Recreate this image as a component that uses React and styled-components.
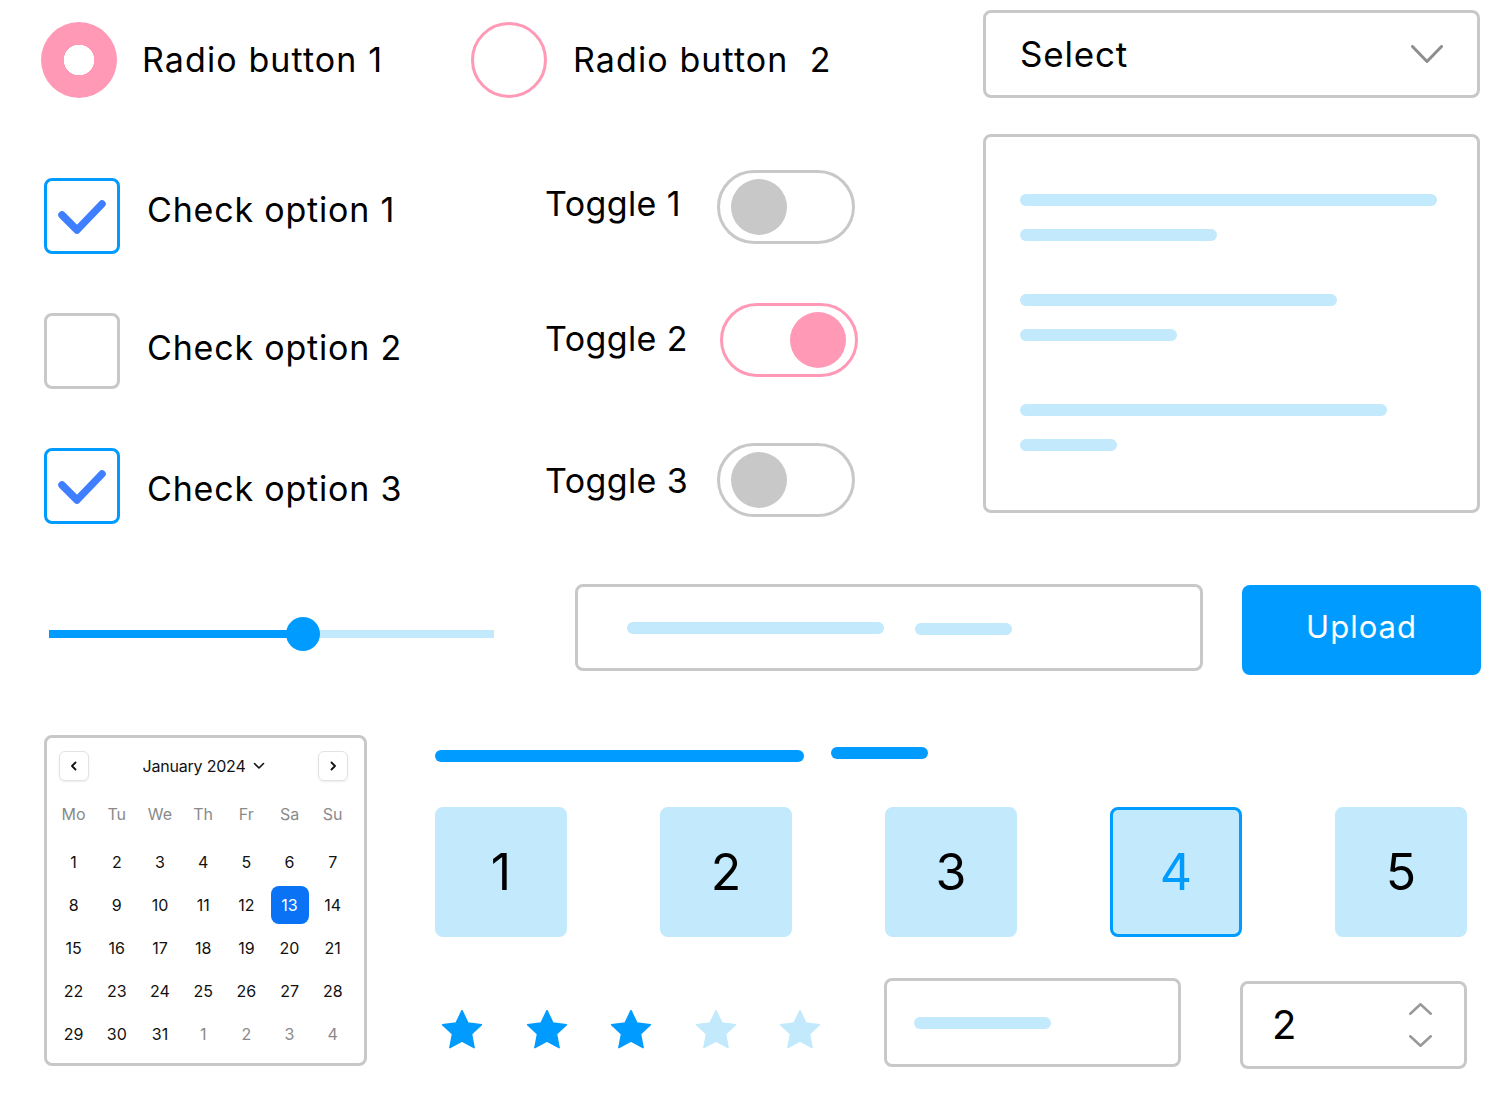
import React from "react";
import styled, { createGlobalStyle } from "styled-components";

const C = {
  pink: "#FF99B6",
  blue: "#009BFF",
  light: "#C2E9FC",
  gray: "#C8C8C8",
  check: "#3F7FFF",
  chevron: "#8E8E8E",
};

const Global = createGlobalStyle`
  html, body { margin: 0; padding: 0; background: #fff; }
  body { font-family: Inter, "Open Sans", sans-serif; color: #000; }
  * { box-sizing: border-box; }
`;

const Page = styled.div`
  width: 1500px;
  height: 1100px;
  display: flex;
  flex-direction: column;
  overflow: hidden;
`;

const TopSection = styled.div`
  height: 584px;
  padding: 10px 0 0 41px;
  display: grid;
  grid-template-columns: 942px 497px;
  align-items: start;
`;

const LeftCol = styled.div`
  display: flex;
  flex-direction: column;
`;

const RadioRow = styled.div`
  margin-top: 12px;
  display: grid;
  grid-template-columns: 430px auto;
`;

const RadioItem = styled.div`
  display: flex;
  align-items: center;
  gap: ${(p) => p.$gap || 25}px;
`;

const RadioCircle = styled.div`
  width: 76px;
  height: 76px;
  border-radius: 50%;
  flex: none;
  ${(p) =>
    p.$on
      ? `background: radial-gradient(circle, #fff 0 15px, ${C.pink} 15.5px);`
      : `border: 3px solid ${C.pink}; background: #fff;`}
`;

const Label = styled.span`
  font-size: ${(p) => p.$size || 34}px;
  letter-spacing: ${(p) => p.$ls ?? 0.8}px;
  line-height: 1;
  white-space: pre;
  color: ${(p) => p.$color || "#000"};
  margin-top: ${(p) => (p.$dy > 0 ? p.$dy * 2 : 0)}px;
  margin-bottom: ${(p) => (p.$dy < 0 ? -p.$dy * 2 : 0)}px;
`;

const ControlsRow = styled.div`
  margin-top: 72px;
  display: flex;
  align-items: flex-start;
`;

const CheckStack = styled.div`
  margin-left: 3px;
  width: 501px;
  padding-top: 8px;
  display: flex;
  flex-direction: column;
  gap: 59px;
`;

const CheckItem = styled.div`
  display: flex;
  align-items: center;
  gap: 27px;
  height: 76px;
`;

const CheckBox = styled.div`
  width: 76px;
  height: 76px;
  flex: none;
  border-radius: 8px;
  border: 3px solid ${(p) => (p.$on ? C.blue : C.gray)};
  display: flex;
  align-items: center;
  justify-content: center;
  position: relative;
`;

const ToggleStack = styled.div`
  display: flex;
  flex-direction: column;
`;

const ToggleItem = styled.div`
  display: grid;
  grid-template-columns: 172px 138px;
  align-items: center;
  height: 74px;
  margin-top: ${(p) => p.$mt || 0}px;
`;

const Track = styled.div`
  width: 138px;
  height: 74px;
  border-radius: 37px;
  border: 3px solid ${(p) => (p.$on ? C.pink : C.gray)};
  padding: 0 9px 0 11px;
  margin-left: ${(p) => p.$dx || 0}px;
  display: flex;
  align-items: center;
  justify-content: ${(p) => (p.$on ? "flex-end" : "flex-start")};
  background: #fff;
`;

const Knob = styled.div`
  width: 56px;
  height: 56px;
  border-radius: 50%;
  background: ${(p) => (p.$on ? C.pink : C.gray)};
`;

const RightCol = styled.div`
  display: flex;
  flex-direction: column;
  gap: 36px;
`;

const Box = styled.div`
  border: 3px solid ${C.gray};
  border-radius: 8px;
  background: #fff;
  width: ${(p) => p.$w}px;
  height: ${(p) => p.$h}px;
  flex: none;
`;

const SelectBox = styled(Box)`
  display: flex;
  align-items: center;
  justify-content: space-between;
  padding: 0 34px 0 34px;
`;

const TextPanel = styled(Box)`
  padding: 57px 0 0 34px;
  display: flex;
  flex-direction: column;
`;

const Line = styled.div`
  height: 12px;
  border-radius: 6px;
  background: ${C.light};
  width: ${(p) => p.$w}px;
  margin-top: ${(p) => p.$mt || 0}px;
  flex: none;
`;

const MidRow = styled.div`
  height: 91px;
  display: flex;
  align-items: flex-start;
`;

const SliderWrap = styled.div`
  margin-left: 49px;
  width: 445px;
  height: 100px;
  display: flex;
  align-items: center;
`;

const SliderFill = styled.div`
  height: 8px;
  background: ${C.blue};
  flex: none;
`;

const SliderRest = styled.div`
  height: 8px;
  background: ${C.light};
  flex: 1;
`;

const SliderThumb = styled.div`
  width: 34px;
  height: 34px;
  border-radius: 50%;
  background: ${C.blue};
  flex: none;
  margin: 0 -17px;
  position: relative;
  z-index: 1;
`;

const InputBox = styled(Box)`
  margin-left: ${(p) => p.$ml || 0}px;
  margin-top: ${(p) => p.$mt || 0}px;
  display: flex;
  align-items: center;
  gap: ${(p) => p.$gap || 0}px;
  padding-left: ${(p) => p.$pl || 0}px;
`;

const UploadButton = styled.button`
  margin-left: 39px;
  margin-top: 1px;
  width: 239px;
  height: 90px;
  border: none;
  border-radius: 8px;
  background: ${C.blue};
  color: #fff;
  font-family: Inter, sans-serif;
  font-size: 31px;
  letter-spacing: 1px;
  display: flex;
  align-items: center;
  justify-content: center;
  padding: 0 0 7px 0;
`;

const BottomRow = styled.div`
  margin-top: 60px;
  display: flex;
  align-items: flex-start;
`;

const Calendar = styled(Box)`
  margin-left: 44px;
  padding: 13px 10px 0 5px;
  font-family: Inter, sans-serif;
`;

const CalHeader = styled.div`
  display: flex;
  align-items: center;
  justify-content: space-between;
  padding: 0 6px 0 7px;
  height: 30px;
`;

const NavBtn = styled.div`
  width: 30px;
  height: 30px;
  border: 1px solid #E2E2E2;
  border-radius: 6px;
  box-shadow: 0 1px 2px rgba(0, 0, 0, 0.08);
  display: flex;
  align-items: center;
  justify-content: center;
`;

const MonthTitle = styled.div`
  display: flex;
  align-items: center;
  gap: 7px;
  font-size: 16px;
  letter-spacing: -0.2px;
  color: #111;
`;

const CalGrid = styled.div`
  display: grid;
  grid-template-columns: repeat(7, 43.2px);
  grid-auto-rows: 43px;
  margin-top: ${(p) => p.$mt || 0}px;
`;

const DayCell = styled.div`
  display: flex;
  align-items: center;
  justify-content: center;
  font-size: 16px;
  color: ${(p) => (p.$muted ? "#8A8A8A" : "#111")};
`;

const Selected = styled.span`
  width: 38px;
  height: 38px;
  border-radius: 8px;
  background: #0A72F4;
  color: #fff;
  display: flex;
  align-items: center;
  justify-content: center;
`;

const RightArea = styled.div`
  margin-left: 68px;
  width: 1046px;
  display: flex;
  flex-direction: column;
`;

const ProgressRow = styled.div`
  margin-top: 12px;
  display: flex;
  align-items: flex-start;
  gap: 27px;
`;

const Bar = styled.div`
  height: 12px;
  border-radius: 6px;
  background: ${C.blue};
  width: ${(p) => p.$w}px;
  margin-top: ${(p) => p.$mt || 0}px;
`;

const PageRow = styled.div`
  margin-top: 45px;
  display: flex;
  gap: 93px;
`;

const PageBox = styled.div`
  width: 132px;
  height: 130px;
  border-radius: 8px;
  background: ${C.light};
  border: 3px solid ${(p) => (p.$active ? C.blue : C.light)};
  display: flex;
  align-items: center;
  justify-content: center;
  font-size: 50px;
  color: ${(p) => (p.$active ? C.blue : "#000")};
`;

const BottomControls = styled.div`
  margin-top: 41px;
  display: flex;
  align-items: flex-start;
`;

const Stars = styled.div`
  margin-top: 30px;
  margin-left: 5px;
  display: flex;
  gap: 40.5px;
`;

const NumberBox = styled(Box)`
  margin-left: 59px;
  margin-top: 3px;
  display: flex;
  align-items: center;
  justify-content: space-between;
  padding: 0 32px 0 29px;
`;

const Spinner = styled.div`
  display: flex;
  flex-direction: column;
  gap: 20px;
`;

const Star = ({ on }) => (
  <svg width="44" height="43" viewBox="0 0 24 23">
    <path
      d="M12 1.2 L15.2 7.9 L22.6 8.9 L17.2 14 L18.6 21.4 L12 17.8 L5.4 21.4 L6.8 14 L1.4 8.9 L8.8 7.9 Z"
      fill={on ? C.blue : C.light}
      stroke={on ? C.blue : C.light}
      strokeWidth="0.8"
      strokeLinejoin="round"
    />
  </svg>
);

const Chevron = ({ w, h, dir = "down", color = C.chevron, sw = 3 }) => (
  <svg width={w} height={h} viewBox={`0 0 ${w} ${h}`} fill="none">
    <path
      d={
        dir === "down"
          ? `M${sw / 2} ${sw / 2} L${w / 2} ${h - sw / 2} L${w - sw / 2} ${sw / 2}`
          : `M${sw / 2} ${h - sw / 2} L${w / 2} ${sw / 2} L${w - sw / 2} ${h - sw / 2}`
      }
      stroke={color}
      strokeWidth={sw}
      strokeLinecap="round"
      strokeLinejoin="round"
    />
  </svg>
);

const CheckMark = () => (
  <svg width="76" height="76" viewBox="0 0 76 76" style={{ position: "absolute", left: -3, top: -3 }}>
    <path d="M18 37 L33 52 L58 26" fill="none" stroke={C.check} strokeWidth="7.5" strokeLinecap="round" strokeLinejoin="round" />
  </svg>
);

const SmallArrow = ({ dir }) => (
  <svg width="12" height="12" viewBox="0 0 12 12" fill="none">
    <path
      d={dir === "left" ? "M7.5 2.5 L4 6 L7.5 9.5" : "M4.5 2.5 L8 6 L4.5 9.5"}
      stroke="#111"
      strokeWidth="1.8"
      strokeLinecap="round"
      strokeLinejoin="round"
    />
  </svg>
);

const weekdays = ["Mo", "Tu", "We", "Th", "Fr", "Sa", "Su"];
const days = [];
for (let i = 1; i <= 31; i++) days.push({ d: i });
[1, 2, 3, 4].forEach((d) => days.push({ d, muted: true }));

const checks = [
  { on: true, dy: -6 },
  { on: false, dy: -3.5 },
  { on: true, dy: 2.5 },
];

const toggles = [
  { on: false, mt: 0, dy: -3.5, dx: 0 },
  { on: true, mt: 59, dy: -1, dx: 3 },
  { on: false, mt: 66, dy: 1, dx: 0 },
];

export default function App() {
  return (
    <Page>
      <Global />
      <TopSection>
        <LeftCol>
          <RadioRow>
            <RadioItem>
              <RadioCircle $on />
              <Label $ls={1.1}>Radio button 1</Label>
            </RadioItem>
            <RadioItem $gap={26}>
              <RadioCircle />
              <Label $ls={1.1}>{"Radio button  2"}</Label>
            </RadioItem>
          </RadioRow>
          <ControlsRow>
            <CheckStack>
              {checks.map((c, i) => (
                <CheckItem key={i}>
                  <CheckBox $on={c.on}>{c.on && <CheckMark />}</CheckBox>
                  <Label $dy={c.dy}>Check option {i + 1}</Label>
                </CheckItem>
              ))}
            </CheckStack>
            <ToggleStack>
              {toggles.map((t, i) => (
                <ToggleItem key={i} $mt={t.mt}>
                  <Label $dy={t.dy} $ls={0.4}>Toggle {i + 1}</Label>
                  <Track $on={t.on} $dx={t.dx}>
                    <Knob $on={t.on} />
                  </Track>
                </ToggleItem>
              ))}
            </ToggleStack>
          </ControlsRow>
        </LeftCol>
        <RightCol>
          <SelectBox $w={497} $h={88}>
            <Label $size={35}>Select</Label>
            <Chevron w={32} h={18} />
          </SelectBox>
          <TextPanel $w={497} $h={379}>
            <Line $w={417} />
            <Line $w={197} $mt={23} />
            <Line $w={317} $mt={53} />
            <Line $w={157} $mt={23} />
            <Line $w={367} $mt={63} />
            <Line $w={97} $mt={23} />
          </TextPanel>
        </RightCol>
      </TopSection>

      <MidRow>
        <SliderWrap>
          <SliderFill style={{ width: "57%" }} />
          <SliderThumb />
          <SliderRest />
        </SliderWrap>
        <InputBox $w={628} $h={87} $ml={81} $pl={49} $gap={31}>
          <Line $w={257} />
          <Line $w={97} $mt={2} />
        </InputBox>
        <UploadButton>Upload</UploadButton>
      </MidRow>

      <BottomRow>
        <Calendar $w={323} $h={331}>
          <CalHeader>
            <NavBtn><SmallArrow dir="left" /></NavBtn>
            <MonthTitle>
              January 2024
              <svg width="12" height="8" viewBox="0 0 12 8" fill="none">
                <path d="M1.5 1.5 L6 6 L10.5 1.5" stroke="#111" strokeWidth="1.6" strokeLinecap="round" strokeLinejoin="round" />
              </svg>
            </MonthTitle>
            <NavBtn><SmallArrow dir="right" /></NavBtn>
          </CalHeader>
          <CalGrid $mt={11}>
            {weekdays.map((w) => (
              <DayCell key={w} $muted>{w}</DayCell>
            ))}
          </CalGrid>
          <CalGrid $mt={5}>
            {days.map((x, i) => (
              <DayCell key={i} $muted={x.muted}>
                {x.d === 13 && !x.muted ? <Selected>13</Selected> : x.d}
              </DayCell>
            ))}
          </CalGrid>
        </Calendar>

        <RightArea>
          <ProgressRow>
            <Bar $w={369} $mt={3} />
            <Bar $w={97} />
          </ProgressRow>
          <PageRow>
            {[1, 2, 3, 4, 5].map((n) => (
              <PageBox key={n} $active={n === 4}>{n}</PageBox>
            ))}
          </PageRow>
          <BottomControls>
            <Stars>
              {[1, 2, 3, 4, 5].map((n) => (
                <Star key={n} on={n <= 3} />
              ))}
            </Stars>
            <InputBox $w={297} $h={89} $ml={62} $pl={27}>
              <Line $w={137} />
            </InputBox>
            <NumberBox $w={227} $h={88}>
              <Label $size={40} $ls={0}>2</Label>
              <Spinner>
                <Chevron w={23} h={12} dir="up" sw={2.5} color="#999" />
                <Chevron w={23} h={12} dir="down" sw={2.5} color="#999" />
              </Spinner>
            </NumberBox>
          </BottomControls>
        </RightArea>
      </BottomRow>
    </Page>
  );
}
